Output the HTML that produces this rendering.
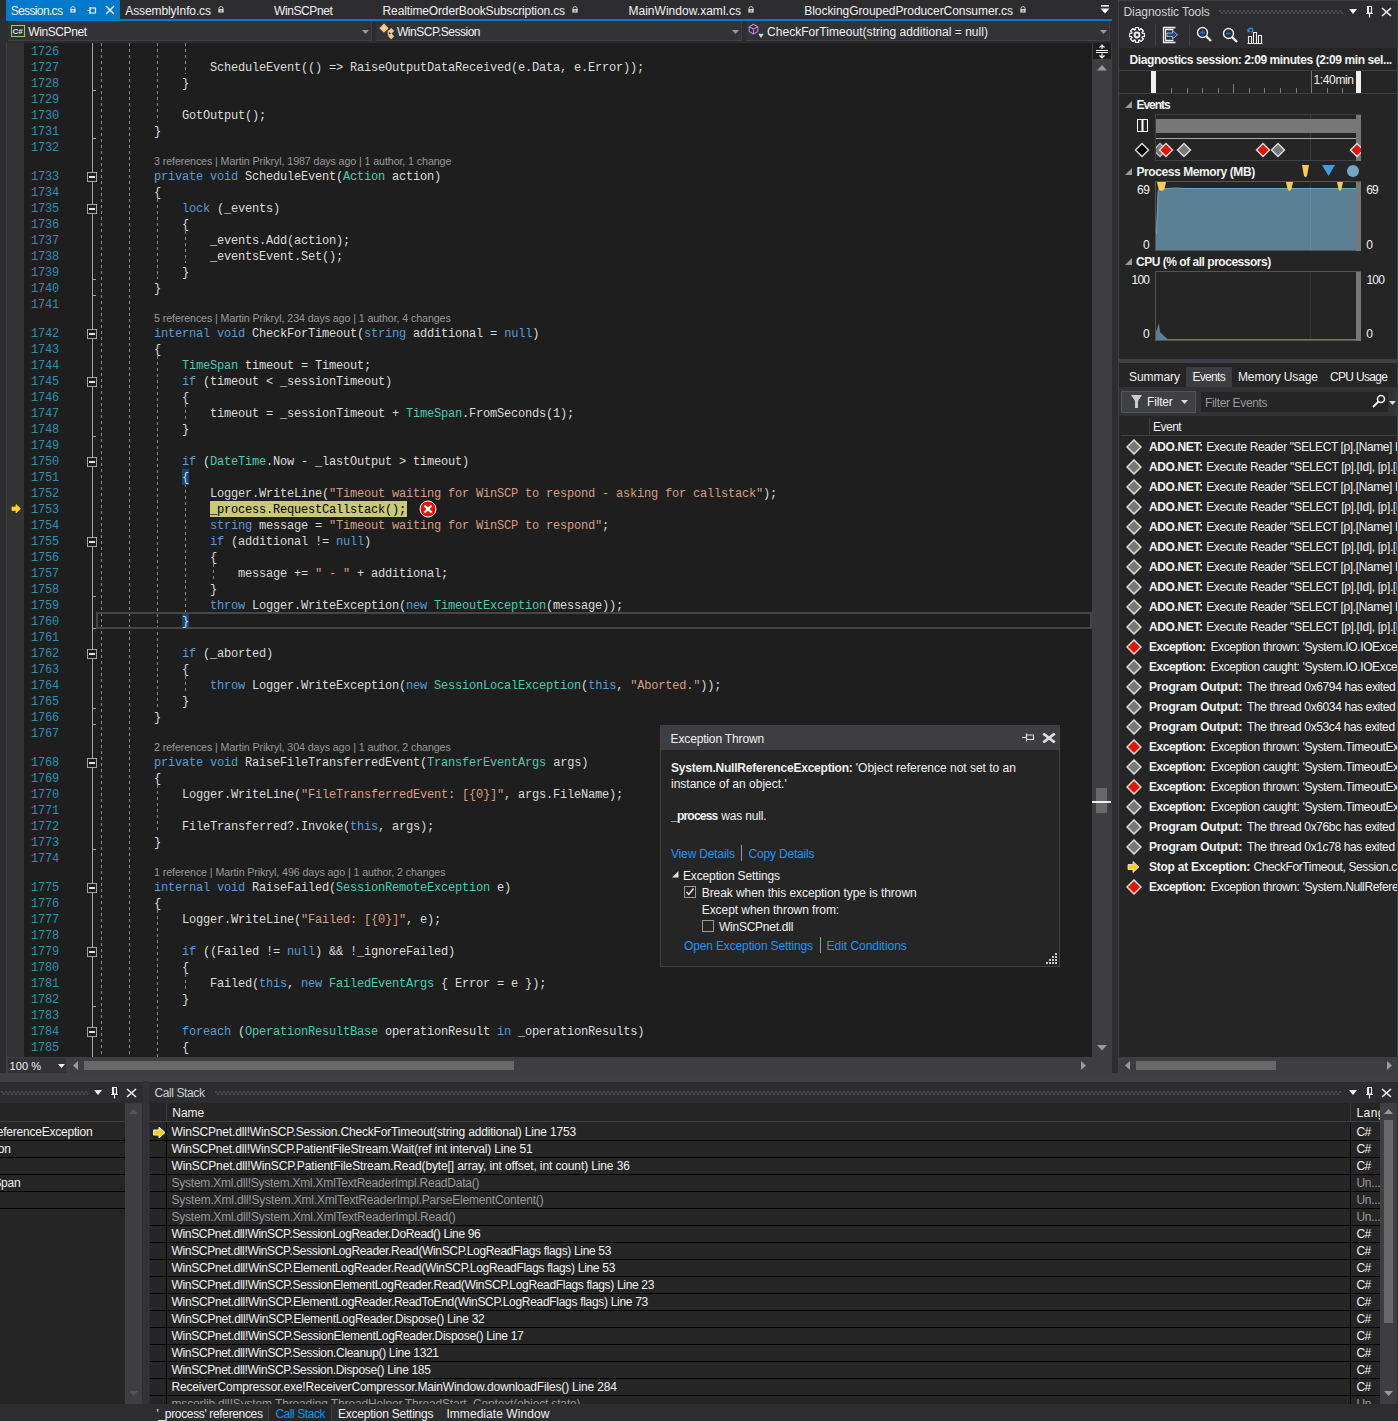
<!DOCTYPE html><html><head><meta charset="utf-8"><style>
*{margin:0;padding:0;box-sizing:border-box}
html,body{width:1398px;height:1421px;overflow:hidden;background:#2d2d30;font-family:"Liberation Sans",sans-serif;font-size:12px;color:#f1f1f1}
.a{position:absolute}
.t{position:absolute;white-space:pre;line-height:16px}
.code{z-index:2;font-family:"Liberation Mono",monospace;font-size:12px;letter-spacing:-0.2px;color:#dcdcdc}
.ln{font-family:"Liberation Mono",monospace;font-size:12px;letter-spacing:-0.2px;color:#2b91af;text-align:right;width:29px}
.k{color:#569cd6}.ty{color:#4ec9b0}.s{color:#d69d85}
.lens{font-size:10.7px;color:#999;letter-spacing:-0.1px}
</style></head><body>
<div class="a" style="left:6px;top:0;width:114px;height:19px;background:#007acc"></div>
<div class="a" style="left:6px;top:19px;width:1106px;height:2px;background:#007acc"></div>
<div class="t" style="left:10.70px;top:2.84px;letter-spacing:-0.637px;">Session.cs</div>
<div class="t" style="left:125.30px;top:2.84px;letter-spacing:-0.119px;">AssemblyInfo.cs</div>
<div class="t" style="left:274.00px;top:2.84px;letter-spacing:-0.403px;">WinSCPnet</div>
<div class="t" style="left:382.60px;top:2.84px;letter-spacing:-0.140px;">RealtimeOrderBookSubscription.cs</div>
<div class="t" style="left:628.40px;top:2.84px;letter-spacing:0.034px;">MainWindow.xaml.cs</div>
<div class="t" style="left:804.30px;top:2.84px;letter-spacing:-0.063px;">BlockingGroupedProducerConsumer.cs</div>
<svg class="a" style="left:70px;top:6px" width="6" height="7"><path d="M1 3 V2.2 Q1 0.6 3 0.6 Q5 0.6 5 2.2 V3" fill="none" stroke="#e8dcc8" stroke-width="0.9"/><rect x="0.3" y="3" width="5.4" height="3.6" fill="#e8dcc8"/><rect x="2.5" y="4" width="1" height="1.6" fill="#333"/></svg>
<svg class="a" style="left:218px;top:6px" width="6" height="7"><path d="M1 3 V2.2 Q1 0.6 3 0.6 Q5 0.6 5 2.2 V3" fill="none" stroke="#d0d0d0" stroke-width="0.9"/><rect x="0.3" y="3" width="5.4" height="3.6" fill="#d0d0d0"/><rect x="2.5" y="4" width="1" height="1.6" fill="#333"/></svg>
<svg class="a" style="left:572px;top:6px" width="6" height="7"><path d="M1 3 V2.2 Q1 0.6 3 0.6 Q5 0.6 5 2.2 V3" fill="none" stroke="#d0d0d0" stroke-width="0.9"/><rect x="0.3" y="3" width="5.4" height="3.6" fill="#d0d0d0"/><rect x="2.5" y="4" width="1" height="1.6" fill="#333"/></svg>
<svg class="a" style="left:748px;top:6px" width="6" height="7"><path d="M1 3 V2.2 Q1 0.6 3 0.6 Q5 0.6 5 2.2 V3" fill="none" stroke="#d0d0d0" stroke-width="0.9"/><rect x="0.3" y="3" width="5.4" height="3.6" fill="#d0d0d0"/><rect x="2.5" y="4" width="1" height="1.6" fill="#333"/></svg>
<svg class="a" style="left:1020px;top:6px" width="6" height="7"><path d="M1 3 V2.2 Q1 0.6 3 0.6 Q5 0.6 5 2.2 V3" fill="none" stroke="#d0d0d0" stroke-width="0.9"/><rect x="0.3" y="3" width="5.4" height="3.6" fill="#d0d0d0"/><rect x="2.5" y="4" width="1" height="1.6" fill="#333"/></svg>
<svg class="a" style="left:87px;top:6px" width="10" height="9"><path d="M0.5 4.5 H3 M3 1 V8 M3 2 H8.5 V7 H3" fill="none" stroke="#fff" stroke-width="1.2"/></svg>
<svg class="a" style="left:105px;top:5px" width="10" height="10"><path d="M1 1 L9 9 M9 1 L1 9" stroke="#fff" stroke-width="1.4"/></svg>
<svg class="a" style="left:1100px;top:5px" width="10" height="10"><rect x="1" y="0" width="8" height="1.6" fill="#fff"/><path d="M0.5 3.5 H9.5 L5 8.5 Z" fill="#fff"/></svg>
<div class="a" style="left:6px;top:21px;width:1106px;height:22px;background:#2d2d30"></div>
<div class="a" style="left:8px;top:21px;width:364px;height:20px;background:#333337;border-right:1px solid #3f3f46;border-bottom:1px solid #3f3f46"></div>
<svg class="a" style="left:362px;top:30px" width="7" height="4"><path d="M0 0 H7 L3.5 4Z" fill="#999"/></svg>
<div class="a" style="left:376px;top:21px;width:366px;height:20px;background:#333337;border-right:1px solid #3f3f46;border-bottom:1px solid #3f3f46"></div>
<svg class="a" style="left:732px;top:30px" width="7" height="4"><path d="M0 0 H7 L3.5 4Z" fill="#999"/></svg>
<div class="a" style="left:746px;top:21px;width:364px;height:20px;background:#333337;border-right:1px solid #3f3f46;border-bottom:1px solid #3f3f46"></div>
<svg class="a" style="left:1100px;top:30px" width="7" height="4"><path d="M0 0 H7 L3.5 4Z" fill="#999"/></svg>
<svg class="a" style="left:11px;top:25px" width="15" height="12"><rect x="0.5" y="0.5" width="13" height="11" fill="#333337" stroke="#8bd17c"/><text x="1.6" y="9" font-family="Liberation Sans" font-size="8" font-weight="bold" fill="#e0e0e0">C#</text></svg>
<div class="t" style="left:28.30px;top:23.84px;letter-spacing:-0.415px;">WinSCPnet</div>
<svg class="a" style="left:378px;top:22px" width="18" height="18"><path d="M6 1.6 L10.6 6.2 L6 10.8 L1.4 6.2 Z" fill="#f2c98e"/><path d="M13.2 6 L16.2 9 L13.2 12 L10.2 9 Z M13.2 11.2 L16.2 14.2 L13.2 17.2 L10.2 14.2 Z" fill="#f2c98e"/><path d="M10.3 8.5 V12.8 H13" fill="none" stroke="#f2c98e" stroke-width="1.2"/></svg>
<div class="t" style="left:397.00px;top:23.84px;letter-spacing:-0.486px;">WinSCP.Session</div>
<svg class="a" style="left:748px;top:23px" width="17" height="17"><path d="M5.5 1.3 L9.8 3.7 V8.5 L5.5 10.9 L1.2 8.5 V3.7 Z M1.2 3.7 L5.5 6.1 L9.8 3.7 M5.5 6.1 V10.9" fill="none" stroke="#b180d7" stroke-width="1.1" stroke-linejoin="round"/><path d="M10.5 11.2 Q12 9.8 13 11.2 Q14 9.8 15.5 11.2 L13 15 Z" fill="#d0d0d0"/></svg>
<div class="t" style="left:767.00px;top:23.84px;letter-spacing:0.042px;">CheckForTimeout(string additional = null)</div>
<div class="a" style="left:8px;top:43px;width:1084px;height:1014px;background:#1e1e1e"></div>
<div class="a" style="left:7px;top:43px;width:17px;height:1014px;background:#333333"></div>
<div class="a" style="left:6px;top:43px;width:1px;height:1030px;background:#3f3f46"></div>
<div class="t ln" style="left:30px;top:44px">1726</div>
<div class="t ln" style="left:30px;top:60px">1727</div>
<div class="t code" style="left:210px;top:60px">ScheduleEvent(() =&gt; RaiseOutputDataReceived(e.Data, e.Error));</div>
<div class="t ln" style="left:30px;top:76px">1728</div>
<div class="t code" style="left:182px;top:76px">}</div>
<div class="t ln" style="left:30px;top:92px">1729</div>
<div class="t ln" style="left:30px;top:108px">1730</div>
<div class="t code" style="left:182px;top:108px">GotOutput();</div>
<div class="t ln" style="left:30px;top:124px">1731</div>
<div class="t code" style="left:154px;top:124px">}</div>
<div class="t ln" style="left:30px;top:140px">1732</div>
<div class="t lens" style="left:154px;top:155px;line-height:13px">3 references | Martin Prikryl, 1987 days ago | 1 author, 1 change</div>
<div class="t ln" style="left:30px;top:169px">1733</div>
<div class="t code" style="left:154px;top:169px"><span class="k">private</span> <span class="k">void</span> ScheduleEvent(<span class="ty">Action</span> action)</div>
<div class="t ln" style="left:30px;top:185px">1734</div>
<div class="t code" style="left:154px;top:185px">{</div>
<div class="t ln" style="left:30px;top:201px">1735</div>
<div class="t code" style="left:182px;top:201px"><span class="k">lock</span> (_events)</div>
<div class="t ln" style="left:30px;top:217px">1736</div>
<div class="t code" style="left:182px;top:217px">{</div>
<div class="t ln" style="left:30px;top:233px">1737</div>
<div class="t code" style="left:210px;top:233px">_events.Add(action);</div>
<div class="t ln" style="left:30px;top:249px">1738</div>
<div class="t code" style="left:210px;top:249px">_eventsEvent.Set();</div>
<div class="t ln" style="left:30px;top:265px">1739</div>
<div class="t code" style="left:182px;top:265px">}</div>
<div class="t ln" style="left:30px;top:281px">1740</div>
<div class="t code" style="left:154px;top:281px">}</div>
<div class="t ln" style="left:30px;top:297px">1741</div>
<div class="t lens" style="left:154px;top:312px;line-height:13px">5 references | Martin Prikryl, 234 days ago | 1 author, 4 changes</div>
<div class="t ln" style="left:30px;top:326px">1742</div>
<div class="t code" style="left:154px;top:326px"><span class="k">internal</span> <span class="k">void</span> CheckForTimeout(<span class="k">string</span> additional = <span class="k">null</span>)</div>
<div class="t ln" style="left:30px;top:342px">1743</div>
<div class="t code" style="left:154px;top:342px">{</div>
<div class="t ln" style="left:30px;top:358px">1744</div>
<div class="t code" style="left:182px;top:358px"><span class="ty">TimeSpan</span> timeout = Timeout;</div>
<div class="t ln" style="left:30px;top:374px">1745</div>
<div class="t code" style="left:182px;top:374px"><span class="k">if</span> (timeout &lt; _sessionTimeout)</div>
<div class="t ln" style="left:30px;top:390px">1746</div>
<div class="t code" style="left:182px;top:390px">{</div>
<div class="t ln" style="left:30px;top:406px">1747</div>
<div class="t code" style="left:210px;top:406px">timeout = _sessionTimeout + <span class="ty">TimeSpan</span>.FromSeconds(1);</div>
<div class="t ln" style="left:30px;top:422px">1748</div>
<div class="t code" style="left:182px;top:422px">}</div>
<div class="t ln" style="left:30px;top:438px">1749</div>
<div class="t ln" style="left:30px;top:454px">1750</div>
<div class="t code" style="left:182px;top:454px"><span class="k">if</span> (<span class="ty">DateTime</span>.Now - _lastOutput &gt; timeout)</div>
<div class="t ln" style="left:30px;top:470px">1751</div>
<div class="t code" style="left:182px;top:470px">{</div>
<div class="t ln" style="left:30px;top:486px">1752</div>
<div class="t code" style="left:210px;top:486px">Logger.WriteLine(<span class="s">"Timeout waiting for WinSCP to respond - asking for callstack"</span>);</div>
<div class="t ln" style="left:30px;top:502px">1753</div>
<div class="t code" style="left:210px;top:502px"><span style="color:#000">_process.RequestCallstack();</span></div>
<div class="t ln" style="left:30px;top:518px">1754</div>
<div class="t code" style="left:210px;top:518px"><span class="k">string</span> message = <span class="s">"Timeout waiting for WinSCP to respond"</span>;</div>
<div class="t ln" style="left:30px;top:534px">1755</div>
<div class="t code" style="left:210px;top:534px"><span class="k">if</span> (additional != <span class="k">null</span>)</div>
<div class="t ln" style="left:30px;top:550px">1756</div>
<div class="t code" style="left:210px;top:550px">{</div>
<div class="t ln" style="left:30px;top:566px">1757</div>
<div class="t code" style="left:238px;top:566px">message += <span class="s">" - "</span> + additional;</div>
<div class="t ln" style="left:30px;top:582px">1758</div>
<div class="t code" style="left:210px;top:582px">}</div>
<div class="t ln" style="left:30px;top:598px">1759</div>
<div class="t code" style="left:210px;top:598px"><span class="k">throw</span> Logger.WriteException(<span class="k">new</span> <span class="ty">TimeoutException</span>(message));</div>
<div class="t ln" style="left:30px;top:614px">1760</div>
<div class="t code" style="left:182px;top:614px">}</div>
<div class="t ln" style="left:30px;top:630px">1761</div>
<div class="t ln" style="left:30px;top:646px">1762</div>
<div class="t code" style="left:182px;top:646px"><span class="k">if</span> (_aborted)</div>
<div class="t ln" style="left:30px;top:662px">1763</div>
<div class="t code" style="left:182px;top:662px">{</div>
<div class="t ln" style="left:30px;top:678px">1764</div>
<div class="t code" style="left:210px;top:678px"><span class="k">throw</span> Logger.WriteException(<span class="k">new</span> <span class="ty">SessionLocalException</span>(<span class="k">this</span>, <span class="s">"Aborted."</span>));</div>
<div class="t ln" style="left:30px;top:694px">1765</div>
<div class="t code" style="left:182px;top:694px">}</div>
<div class="t ln" style="left:30px;top:710px">1766</div>
<div class="t code" style="left:154px;top:710px">}</div>
<div class="t ln" style="left:30px;top:726px">1767</div>
<div class="t lens" style="left:154px;top:741px;line-height:13px">2 references | Martin Prikryl, 304 days ago | 1 author, 2 changes</div>
<div class="t ln" style="left:30px;top:755px">1768</div>
<div class="t code" style="left:154px;top:755px"><span class="k">private</span> <span class="k">void</span> RaiseFileTransferredEvent(<span class="ty">TransferEventArgs</span> args)</div>
<div class="t ln" style="left:30px;top:771px">1769</div>
<div class="t code" style="left:154px;top:771px">{</div>
<div class="t ln" style="left:30px;top:787px">1770</div>
<div class="t code" style="left:182px;top:787px">Logger.WriteLine(<span class="s">"FileTransferredEvent: [{0}]"</span>, args.FileName);</div>
<div class="t ln" style="left:30px;top:803px">1771</div>
<div class="t ln" style="left:30px;top:819px">1772</div>
<div class="t code" style="left:182px;top:819px">FileTransferred?.Invoke(<span class="k">this</span>, args);</div>
<div class="t ln" style="left:30px;top:835px">1773</div>
<div class="t code" style="left:154px;top:835px">}</div>
<div class="t ln" style="left:30px;top:851px">1774</div>
<div class="t lens" style="left:154px;top:866px;line-height:13px">1 reference | Martin Prikryl, 496 days ago | 1 author, 2 changes</div>
<div class="t ln" style="left:30px;top:880px">1775</div>
<div class="t code" style="left:154px;top:880px"><span class="k">internal</span> <span class="k">void</span> RaiseFailed(<span class="ty">SessionRemoteException</span> e)</div>
<div class="t ln" style="left:30px;top:896px">1776</div>
<div class="t code" style="left:154px;top:896px">{</div>
<div class="t ln" style="left:30px;top:912px">1777</div>
<div class="t code" style="left:182px;top:912px">Logger.WriteLine(<span class="s">"Failed: [{0}]"</span>, e);</div>
<div class="t ln" style="left:30px;top:928px">1778</div>
<div class="t ln" style="left:30px;top:944px">1779</div>
<div class="t code" style="left:182px;top:944px"><span class="k">if</span> ((Failed != <span class="k">null</span>) &amp;&amp; !_ignoreFailed)</div>
<div class="t ln" style="left:30px;top:960px">1780</div>
<div class="t code" style="left:182px;top:960px">{</div>
<div class="t ln" style="left:30px;top:976px">1781</div>
<div class="t code" style="left:210px;top:976px">Failed(<span class="k">this</span>, <span class="k">new</span> <span class="ty">FailedEventArgs</span> { Error = e });</div>
<div class="t ln" style="left:30px;top:992px">1782</div>
<div class="t code" style="left:182px;top:992px">}</div>
<div class="t ln" style="left:30px;top:1008px">1783</div>
<div class="t ln" style="left:30px;top:1024px">1784</div>
<div class="t code" style="left:182px;top:1024px"><span class="k">foreach</span> (<span class="ty">OperationResultBase</span> operationResult <span class="k">in</span> _operationResults)</div>
<div class="t ln" style="left:30px;top:1040px">1785</div>
<div class="t code" style="left:182px;top:1040px">{</div>
<div class="a" style="left:92px;top:43px;width:1px;height:1014px;background:#a5a5a5"></div>
<svg class="a" style="left:87px;top:172px" width="10" height="10"><rect x="0.5" y="0.5" width="9" height="9" fill="#1e1e1e" stroke="#a5a5a5"/><path d="M2 5 H8" stroke="#e0e0e0" stroke-width="2"/></svg>
<svg class="a" style="left:87px;top:204px" width="10" height="10"><rect x="0.5" y="0.5" width="9" height="9" fill="#1e1e1e" stroke="#a5a5a5"/><path d="M2 5 H8" stroke="#e0e0e0" stroke-width="2"/></svg>
<svg class="a" style="left:87px;top:329px" width="10" height="10"><rect x="0.5" y="0.5" width="9" height="9" fill="#1e1e1e" stroke="#a5a5a5"/><path d="M2 5 H8" stroke="#e0e0e0" stroke-width="2"/></svg>
<svg class="a" style="left:87px;top:377px" width="10" height="10"><rect x="0.5" y="0.5" width="9" height="9" fill="#1e1e1e" stroke="#a5a5a5"/><path d="M2 5 H8" stroke="#e0e0e0" stroke-width="2"/></svg>
<svg class="a" style="left:87px;top:457px" width="10" height="10"><rect x="0.5" y="0.5" width="9" height="9" fill="#1e1e1e" stroke="#a5a5a5"/><path d="M2 5 H8" stroke="#e0e0e0" stroke-width="2"/></svg>
<svg class="a" style="left:87px;top:537px" width="10" height="10"><rect x="0.5" y="0.5" width="9" height="9" fill="#1e1e1e" stroke="#a5a5a5"/><path d="M2 5 H8" stroke="#e0e0e0" stroke-width="2"/></svg>
<svg class="a" style="left:87px;top:649px" width="10" height="10"><rect x="0.5" y="0.5" width="9" height="9" fill="#1e1e1e" stroke="#a5a5a5"/><path d="M2 5 H8" stroke="#e0e0e0" stroke-width="2"/></svg>
<svg class="a" style="left:87px;top:758px" width="10" height="10"><rect x="0.5" y="0.5" width="9" height="9" fill="#1e1e1e" stroke="#a5a5a5"/><path d="M2 5 H8" stroke="#e0e0e0" stroke-width="2"/></svg>
<svg class="a" style="left:87px;top:883px" width="10" height="10"><rect x="0.5" y="0.5" width="9" height="9" fill="#1e1e1e" stroke="#a5a5a5"/><path d="M2 5 H8" stroke="#e0e0e0" stroke-width="2"/></svg>
<svg class="a" style="left:87px;top:947px" width="10" height="10"><rect x="0.5" y="0.5" width="9" height="9" fill="#1e1e1e" stroke="#a5a5a5"/><path d="M2 5 H8" stroke="#e0e0e0" stroke-width="2"/></svg>
<svg class="a" style="left:87px;top:1027px" width="10" height="10"><rect x="0.5" y="0.5" width="9" height="9" fill="#1e1e1e" stroke="#a5a5a5"/><path d="M2 5 H8" stroke="#e0e0e0" stroke-width="2"/></svg>
<div class="a" style="left:92px;top:90px;width:4px;height:1px;background:#a5a5a5"></div>
<div class="a" style="left:92px;top:138px;width:4px;height:1px;background:#a5a5a5"></div>
<div class="a" style="left:92px;top:279px;width:4px;height:1px;background:#a5a5a5"></div>
<div class="a" style="left:92px;top:295px;width:4px;height:1px;background:#a5a5a5"></div>
<div class="a" style="left:92px;top:436px;width:4px;height:1px;background:#a5a5a5"></div>
<div class="a" style="left:92px;top:596px;width:4px;height:1px;background:#a5a5a5"></div>
<div class="a" style="left:92px;top:628px;width:4px;height:1px;background:#a5a5a5"></div>
<div class="a" style="left:92px;top:708px;width:4px;height:1px;background:#a5a5a5"></div>
<div class="a" style="left:92px;top:724px;width:4px;height:1px;background:#a5a5a5"></div>
<div class="a" style="left:92px;top:849px;width:4px;height:1px;background:#a5a5a5"></div>
<div class="a" style="left:92px;top:1006px;width:4px;height:1px;background:#a5a5a5"></div>
<div class="a" style="left:101px;top:43px;width:1px;height:1014px;background:repeating-linear-gradient(to bottom,#8a8a8a 0,#8a8a8a 3px,transparent 3px,transparent 6px)"></div>
<div class="a" style="left:129px;top:43px;width:1px;height:1014px;background:repeating-linear-gradient(to bottom,#8a8a8a 0,#8a8a8a 3px,transparent 3px,transparent 6px)"></div>
<div class="a" style="left:157px;top:43px;width:1px;height:79px;background:repeating-linear-gradient(to bottom,#8a8a8a 0,#8a8a8a 3px,transparent 3px,transparent 6px)"></div>
<div class="a" style="left:157px;top:199px;width:1px;height:80px;background:repeating-linear-gradient(to bottom,#8a8a8a 0,#8a8a8a 3px,transparent 3px,transparent 6px)"></div>
<div class="a" style="left:157px;top:356px;width:1px;height:352px;background:repeating-linear-gradient(to bottom,#8a8a8a 0,#8a8a8a 3px,transparent 3px,transparent 6px)"></div>
<div class="a" style="left:157px;top:785px;width:1px;height:48px;background:repeating-linear-gradient(to bottom,#8a8a8a 0,#8a8a8a 3px,transparent 3px,transparent 6px)"></div>
<div class="a" style="left:157px;top:910px;width:1px;height:147px;background:repeating-linear-gradient(to bottom,#8a8a8a 0,#8a8a8a 3px,transparent 3px,transparent 6px)"></div>
<div class="a" style="left:185px;top:43px;width:1px;height:31px;background:repeating-linear-gradient(to bottom,#8a8a8a 0,#8a8a8a 3px,transparent 3px,transparent 6px)"></div>
<div class="a" style="left:185px;top:231px;width:1px;height:32px;background:repeating-linear-gradient(to bottom,#8a8a8a 0,#8a8a8a 3px,transparent 3px,transparent 6px)"></div>
<div class="a" style="left:185px;top:404px;width:1px;height:16px;background:repeating-linear-gradient(to bottom,#8a8a8a 0,#8a8a8a 3px,transparent 3px,transparent 6px)"></div>
<div class="a" style="left:185px;top:484px;width:1px;height:128px;background:repeating-linear-gradient(to bottom,#8a8a8a 0,#8a8a8a 3px,transparent 3px,transparent 6px)"></div>
<div class="a" style="left:185px;top:676px;width:1px;height:16px;background:repeating-linear-gradient(to bottom,#8a8a8a 0,#8a8a8a 3px,transparent 3px,transparent 6px)"></div>
<div class="a" style="left:185px;top:974px;width:1px;height:16px;background:repeating-linear-gradient(to bottom,#8a8a8a 0,#8a8a8a 3px,transparent 3px,transparent 6px)"></div>
<div class="a" style="left:213px;top:564px;width:1px;height:16px;background:repeating-linear-gradient(to bottom,#8a8a8a 0,#8a8a8a 3px,transparent 3px,transparent 6px)"></div>
<div class="a" style="left:182px;top:469px;width:7px;height:16px;background:#11497d"></div>
<div class="a" style="left:182px;top:613px;width:7px;height:16px;background:#11497d"></div>
<div class="a" style="left:96px;top:612px;width:996px;height:17px;border:2px solid #464646"></div>
<div class="a" style="left:210px;top:501px;width:197px;height:16px;background:#c9c977"></div>
<svg class="a" style="left:419px;top:500px" width="18" height="18"><circle cx="9" cy="9" r="8" fill="#e51400" stroke="#fff" stroke-width="1"/><path d="M5.5 5.5 L12.5 12.5 M12.5 5.5 L5.5 12.5" stroke="#fff" stroke-width="2.2"/></svg>
<svg class="a" style="left:11px;top:504px" width="11" height="10"><path d="M1 3 H5 V0.5 L9.5 4.75 L5 9 V6.5 H1 Z" fill="#fcd22a" stroke="#fcd22a" stroke-width="0.8" stroke-linejoin="round"/></svg>
<div style="position:absolute;left:0;top:0;z-index:5">
<div class="a" style="left:660px;top:725px;width:400px;height:242px;background:#252526;border:1px solid #434346"></div>
<div class="a" style="left:661px;top:726px;width:398px;height:24px;background:#3e3e42"></div>
<div class="t" style="left:670.60px;top:730.84px;letter-spacing:-0.155px;">Exception Thrown</div>
<svg class="a" style="left:1022px;top:733px" width="13" height="9"><path d="M0 4.5 H4.5 M4.5 0.5 V8.5 M4.5 2 H11.5 V6.5 H4.5" fill="none" stroke="#ddd" stroke-width="1.2"/></svg>
<svg class="a" style="left:1042px;top:733px" width="14" height="10"><path d="M1.2 0.5 L12.8 9.5 M12.8 0.5 L1.2 9.5" stroke="#ddd" stroke-width="2.8"/></svg>
<div class="t" style="left:671.00px;top:759.84px;font-weight:bold;letter-spacing:-0.216px;">System.NullReferenceException:</div>
<div class="t" style="left:855.80px;top:759.84px;letter-spacing:-0.009px;">'Object reference not set to an</div>
<div class="t" style="left:671.00px;top:775.84px;">instance of an object.'</div>
<div class="t" style="left:671.12px;top:807.84px;font-weight:bold;letter-spacing:-0.803px;">_process</div>
<div class="t" style="left:721.22px;top:807.84px;letter-spacing:-0.164px;">was null.</div>
<div class="t" style="left:671.00px;top:845.84px;letter-spacing:-0.165px;color:#1f95f5;">View Details</div>
<div class="a" style="left:741px;top:845px;width:1px;height:16px;background:#999"></div>
<div class="t" style="left:748.50px;top:845.84px;letter-spacing:-0.175px;color:#1f95f5;">Copy Details</div>
<svg class="a" style="left:672px;top:871px" width="7" height="7"><path d="M6.5 0 V6.5 H0 Z" fill="#ddd"/></svg>
<div class="t" style="left:683.00px;top:867.84px;letter-spacing:-0.141px;">Exception Settings</div>
<svg class="a" style="left:684px;top:886px" width="12" height="12"><rect x="0.5" y="0.5" width="11" height="11" fill="#252526" stroke="#999"/><path d="M2.5 6 L4.8 8.5 L9.5 2.5" fill="none" stroke="#f1f1f1" stroke-width="1.3"/></svg>
<div class="t" style="left:701.70px;top:884.84px;letter-spacing:-0.063px;">Break when this exception type is thrown</div>
<div class="t" style="left:701.70px;top:901.84px;letter-spacing:-0.053px;">Except when thrown from:</div>
<svg class="a" style="left:702px;top:920px" width="12" height="12"><rect x="0.5" y="0.5" width="11" height="11" fill="#252526" stroke="#999"/></svg>
<div class="t" style="left:719.00px;top:918.84px;letter-spacing:-0.255px;">WinSCPnet.dll</div>
<div class="t" style="left:684.00px;top:937.84px;letter-spacing:-0.140px;color:#1f95f5;">Open Exception Settings</div>
<div class="a" style="left:820px;top:937px;width:1px;height:16px;background:#999"></div>
<div class="t" style="left:826.60px;top:937.84px;letter-spacing:-0.036px;color:#1f95f5;">Edit Conditions</div>
<svg class="a" style="left:1046px;top:953px" width="12" height="12"><rect x="9" y="0" width="2" height="2" fill="#ccc"/><rect x="6" y="3" width="2" height="2" fill="#ccc"/><rect x="9" y="3" width="2" height="2" fill="#ccc"/><rect x="3" y="6" width="2" height="2" fill="#ccc"/><rect x="6" y="6" width="2" height="2" fill="#ccc"/><rect x="9" y="6" width="2" height="2" fill="#ccc"/><rect x="0" y="9" width="2" height="2" fill="#ccc"/><rect x="3" y="9" width="2" height="2" fill="#ccc"/><rect x="6" y="9" width="2" height="2" fill="#ccc"/><rect x="9" y="9" width="2" height="2" fill="#ccc"/></svg>
</div>
<div class="a" style="left:1092px;top:43px;width:20px;height:1014px;background:#3e3e42"></div>
<div class="a" style="left:1093px;top:43px;width:18px;height:16px;background:#1e1e1e"></div>
<div class="a" style="left:6px;top:1057px;width:1106px;height:16px;background:#3e3e42"></div>
<div class="a" style="left:8px;top:1058px;width:58px;height:15px;background:#333337"></div>
<div class="t" style="left:9.60px;top:1058.19px;font-size:11px;letter-spacing:0.051px;">100 %</div>
<svg class="a" style="left:58px;top:1064px" width="7" height="4"><path d="M0 0 H7 L3.5 4Z" fill="#f1f1f1"/></svg>
<svg class="a" style="left:73px;top:1061px" width="6" height="10"><path d="M5 0 V9 L0 4.5Z" fill="#999"/></svg>
<div class="a" style="left:84px;top:1061px;width:430px;height:9px;background:#686868"></div>
<svg class="a" style="left:1081px;top:1061px" width="6" height="10"><path d="M0 0 V9 L5 4.5Z" fill="#999"/></svg>
<svg class="a" style="left:1097px;top:65px" width="10" height="6"><path d="M0 5.5 L5 0 L10 5.5Z" fill="#999"/></svg>
<svg class="a" style="left:1097px;top:1045px" width="10" height="6"><path d="M0 0 L5 5.5 L10 0Z" fill="#999"/></svg>
<div class="a" style="left:1096px;top:788px;width:11px;height:25px;background:#686868"></div>
<div class="a" style="left:1092px;top:801px;width:19px;height:2px;background:#f1f1f1"></div>
<svg class="a" style="left:1093px;top:44px" width="18" height="15"><path d="M9 1 V5 M9 9.5 V14 M6.5 3.5 L9 1 L11.5 3.5 M6.5 11.5 L9 14 L11.5 11.5 M3 6.5 H15 M3 8.5 H15" fill="none" stroke="#f1f1f1" stroke-width="1.2"/></svg>
<div class="a" style="left:1118px;top:0;width:1px;height:1073px;background:#3f3f46"></div>
<div class="a" style="left:1119px;top:0;width:279px;height:1073px;background:#252526"></div>
<div class="a" style="left:1119px;top:0;width:279px;height:48px;background:#2d2d30"></div>
<div class="t" style="left:1123.50px;top:3.84px;letter-spacing:-0.057px;color:#d0d0d0;">Diagnostic Tools</div>
<div class="a" style="left:1218px;top:9px;width:125px;height:5px;background-image:radial-gradient(circle,#4a4a4e 0.7px,transparent 0.9px);background-size:4px 4px;background-position:0 0"></div>
<div class="a" style="left:1220px;top:11px;width:123px;height:3px;background-image:radial-gradient(circle,#4a4a4e 0.7px,transparent 0.9px);background-size:4px 4px"></div>
<svg class="a" style="left:1349px;top:9px" width="8" height="5"><path d="M0 0 H8 L4 5Z" fill="#f1f1f1"/></svg>
<svg class="a" style="left:1365px;top:6px" width="9" height="12"><path d="M2.5 0.5 H6.5 V7 H2.5 Z M3.5 1 V7 M1 7.5 H8 M4.5 7.5 V11.5" fill="none" stroke="#f1f1f1" stroke-width="1.1"/></svg>
<svg class="a" style="left:1381px;top:7px" width="11" height="10"><path d="M1 1 L10 9 M10 1 L1 9" stroke="#f1f1f1" stroke-width="1.6"/></svg>
<svg class="a" style="left:1128px;top:26px" width="18" height="18"><g transform="translate(9 9)"><path d="M5.35 -1.65 L7.42 -1.66 L7.42 1.66 L5.35 1.65 L4.95 2.61 L6.42 4.07 L4.07 6.42 L2.61 4.95 L1.65 5.35 L1.66 7.42 L-1.66 7.42 L-1.65 5.35 L-2.61 4.95 L-4.07 6.42 L-6.42 4.07 L-4.95 2.61 L-5.35 1.65 L-7.42 1.66 L-7.42 -1.66 L-5.35 -1.65 L-4.95 -2.61 L-6.42 -4.07 L-4.07 -6.42 L-2.61 -4.95 L-1.65 -5.35 L-1.66 -7.42 L1.66 -7.42 L1.65 -5.35 L2.61 -4.95 L4.07 -6.42 L6.42 -4.07 L4.95 -2.61 Z" fill="none" stroke="#f0f0f0" stroke-width="1.3" stroke-linejoin="round"/><circle r="2.4" fill="none" stroke="#f0f0f0" stroke-width="2"/></g></svg>
<div class="a" style="left:1155px;top:24px;width:1px;height:22px;background:#3f3f46"></div>
<div class="a" style="left:1189px;top:24px;width:1px;height:22px;background:#3f3f46"></div>
<svg class="a" style="left:1162px;top:26px" width="18" height="18"><path d="M13.5 1.5 H1.5 V16.5 H13.5 M11.5 3.5 H3.5 V14.5 H11.5" fill="none" stroke="#f0f0f0" stroke-width="1.3"/><path d="M5 7 H10.5 V4.5 L15.5 8.75 L10.5 13 V10.5 H5 Z" fill="#0e4fa0" stroke="#e0e0e0" stroke-width="0.7"/></svg>
<svg class="a" style="left:1196px;top:26px" width="18" height="18"><circle cx="6.5" cy="6.5" r="5" fill="none" stroke="#eee" stroke-width="1.4"/><path d="M10 10 L15 15" stroke="#eee" stroke-width="2.4"/><path d="M4 6.5 H9 M6.5 4 V9" stroke="#1e70c8" stroke-width="1.5"/></svg>
<svg class="a" style="left:1222px;top:27px" width="18" height="18"><circle cx="6.5" cy="6.5" r="5" fill="none" stroke="#eee" stroke-width="1.4"/><path d="M10 10 L15 15" stroke="#eee" stroke-width="2.4"/><path d="M4 6.5 H9" stroke="#1e70c8" stroke-width="1.5"/></svg>
<svg class="a" style="left:1246px;top:27px" width="18" height="18"><path d="M2.5 16.5 V9.5 H5.5 V16.5 M7.5 16.5 V5.5 H10.5 V16.5 M12.5 16.5 V8.5 H15.5 V16.5 M1.5 16.5 H16.5" fill="none" stroke="#eee" stroke-width="1.1"/><path d="M2 4 Q3 0.5 6 1.5 Q8 3 5.5 5.5 M2 2 L2 4.5 L4.5 4.5" fill="none" stroke="#1e90e8" stroke-width="1.4"/></svg>
<div class="t" style="left:1129.60px;top:51.84px;font-weight:bold;letter-spacing:-0.412px;">Diagnostics session: 2:09 minutes (2:09 min sel...</div>
<div class="a" style="left:1119px;top:70px;width:279px;height:1px;background:#3f3f46"></div>
<div class="a" style="left:1119px;top:93px;width:279px;height:1px;background:#3f3f46"></div>
<div class="a" style="left:1171px;top:88px;width:1px;height:5px;background:#777"></div>
<div class="a" style="left:1187px;top:88px;width:1px;height:5px;background:#777"></div>
<div class="a" style="left:1202px;top:88px;width:1px;height:5px;background:#777"></div>
<div class="a" style="left:1218px;top:88px;width:1px;height:5px;background:#777"></div>
<div class="a" style="left:1249px;top:88px;width:1px;height:5px;background:#777"></div>
<div class="a" style="left:1264px;top:88px;width:1px;height:5px;background:#777"></div>
<div class="a" style="left:1280px;top:88px;width:1px;height:5px;background:#777"></div>
<div class="a" style="left:1296px;top:88px;width:1px;height:5px;background:#777"></div>
<div class="a" style="left:1327px;top:88px;width:1px;height:5px;background:#777"></div>
<div class="a" style="left:1342px;top:88px;width:1px;height:5px;background:#777"></div>
<div class="a" style="left:1233px;top:84px;width:1px;height:9px;background:#777"></div>
<div class="a" style="left:1311px;top:71px;width:1px;height:22px;background:#777"></div>
<div class="t" style="left:1313.50px;top:71.84px;letter-spacing:-0.365px;">1:40min</div>
<div class="a" style="left:1151px;top:71px;width:5px;height:22px;background:#f1f1f1"></div>
<div class="a" style="left:1356px;top:71px;width:5px;height:22px;background:#f1f1f1"></div>
<svg class="a" style="left:1125px;top:101px" width="8" height="8"><path d="M7 0 L7 7 L0 7 Z" fill="#999"/></svg>
<div class="t" style="left:1136.40px;top:96.84px;font-weight:bold;letter-spacing:-0.990px;">Events</div>
<div class="a" style="left:1155px;top:114px;width:206px;height:47px;border:1px solid #3f3f46"></div>
<div class="a" style="left:1310px;top:115px;width:1px;height:45px;background:#3a3a3a"></div>
<div class="a" style="left:1156px;top:119px;width:200px;height:14px;background:#777"></div>
<div class="a" style="left:1156px;top:138px;width:205px;height:1px;background:#aaa"></div>
<div class="a" style="left:1356px;top:115px;width:5px;height:46px;background:#777"></div>
<svg class="a" style="left:1137px;top:119px" width="11" height="13"><rect x="0.5" y="0.5" width="10" height="12" fill="none" stroke="#fff"/><rect x="4.5" y="0.5" width="2" height="12" fill="#fff"/></svg>
<svg class="a" style="left:1134px;top:142px" width="16" height="16"><path d="M8 1.5 L14.5 8 L8 14.5 L1.5 8 Z" fill="#000" stroke="#ddd" stroke-width="1.4"/></svg>
<div class="a" style="left:1156px;top:140px;width:205px;height:20px;overflow:hidden">
<svg class="a" style="left:-4px;top:2px" width="16" height="16"><path d="M8 1.5 L14.5 8 L8 14.5 L1.5 8 Z" fill="#777" stroke="#bbb" stroke-width="1.4"/></svg>
<svg class="a" style="left:2px;top:2px" width="16" height="16"><path d="M8 1.5 L14.5 8 L8 14.5 L1.5 8 Z" fill="#e51400" stroke="#ddd" stroke-width="1.4"/></svg>
<svg class="a" style="left:20px;top:2px" width="16" height="16"><path d="M8 1.5 L14.5 8 L8 14.5 L1.5 8 Z" fill="#777" stroke="#ddd" stroke-width="1.4"/></svg>
<svg class="a" style="left:99px;top:2px" width="16" height="16"><path d="M8 1.5 L14.5 8 L8 14.5 L1.5 8 Z" fill="#e51400" stroke="#ddd" stroke-width="1.4"/></svg>
<svg class="a" style="left:114px;top:2px" width="16" height="16"><path d="M8 1.5 L14.5 8 L8 14.5 L1.5 8 Z" fill="#777" stroke="#ddd" stroke-width="1.4"/></svg>
<svg class="a" style="left:193px;top:2px" width="16" height="16"><path d="M8 1.5 L14.5 8 L8 14.5 L1.5 8 Z" fill="#e51400" stroke="#ddd" stroke-width="1.4"/></svg>
</div>
<svg class="a" style="left:1125px;top:168px" width="8" height="8"><path d="M7 0 L7 7 L0 7 Z" fill="#999"/></svg>
<div class="t" style="left:1136.40px;top:163.84px;font-weight:bold;letter-spacing:-0.402px;">Process Memory (MB)</div>
<svg class="a" style="left:1302px;top:165px" width="8" height="13"><path d="M0 0 H7 L5 11 Q3.5 13 2 11 Z" fill="#f7c95c"/></svg>
<svg class="a" style="left:1322px;top:165px" width="14" height="11"><path d="M0 0 H13 L6.5 11 Z" fill="#3c9ce6"/></svg>
<div class="a" style="left:1347px;top:165px;width:12px;height:12px;border-radius:6px;background:#72a7c4"></div>
<div class="a" style="left:1155px;top:181px;width:206px;height:70px;border:1px solid #555"></div>
<svg class="a" style="left:1156px;top:182px" width="204" height="68"><path d="M0 68 L0 52 L2 10 L3 7 L10 6.5 L20 6 L30 6.5 L200 6.5 L200 68 Z" fill="#5b7f93"/><path d="M0.5 52 L2 10 L3 7 L10 6.5 L20 6 L30 6.5 L200 6.5" fill="none" stroke="#6aa5c6" stroke-width="1"/></svg>
<div class="a" style="left:1310px;top:182px;width:1px;height:69px;background:rgba(255,255,255,0.08)"></div>
<div class="a" style="left:1356px;top:182px;width:5px;height:69px;background:#777"></div>
<svg class="a" style="left:1157px;top:182px" width="9" height="10"><path d="M0 0 H9 L7.5 7 Q4.5 11 1.5 7 Z" fill="#f7c95c"/></svg>
<svg class="a" style="left:1286px;top:182px" width="7" height="10"><path d="M0 0 H7 L5.5 7 Q3.5 11 1.5 7 Z" fill="#f7c95c"/></svg>
<svg class="a" style="left:1337px;top:182px" width="6" height="10"><path d="M0 0 H6 L4.5 7 Q3.0 11 1.5 7 Z" fill="#f7c95c"/></svg>
<div class="t" style="left:1137.00px;top:181.84px;letter-spacing:-0.350px;">69</div>
<div class="t" style="left:1143.00px;top:236.84px;">0</div>
<div class="t" style="left:1366.30px;top:181.84px;letter-spacing:-0.850px;">69</div>
<div class="t" style="left:1366.30px;top:236.84px;">0</div>
<svg class="a" style="left:1125px;top:258px" width="8" height="8"><path d="M7 0 L7 7 L0 7 Z" fill="#999"/></svg>
<div class="t" style="left:1136.00px;top:253.84px;font-weight:bold;letter-spacing:-0.479px;">CPU (% of all processors)</div>
<div class="a" style="left:1155px;top:271px;width:206px;height:70px;border:1px solid #555"></div>
<div class="a" style="left:1310px;top:272px;width:1px;height:68px;background:rgba(255,255,255,0.08)"></div>
<div class="a" style="left:1356px;top:272px;width:5px;height:69px;background:#777"></div>
<svg class="a" style="left:1156px;top:272px" width="200" height="68"><path d="M0 68 L0 60 L3 51 L4 60 L8 64 L13 68 Z" fill="#5b7f93"/><path d="M0 67.5 H200" stroke="#5b7f93"/></svg>
<div class="t" style="left:1131.60px;top:271.84px;letter-spacing:-0.810px;">100</div>
<div class="t" style="left:1143.00px;top:325.84px;">0</div>
<div class="t" style="left:1366.50px;top:271.84px;letter-spacing:-0.810px;">100</div>
<div class="t" style="left:1366.30px;top:325.84px;">0</div>
<div class="a" style="left:1119px;top:359px;width:279px;height:4px;background:#3f3f46"></div>
<div class="a" style="left:1119px;top:363px;width:279px;height:24px;background:#252526"></div>
<div class="a" style="left:1186px;top:367px;width:46px;height:20px;background:#3e3e42"></div>
<div class="t" style="left:1129.00px;top:368.84px;letter-spacing:-0.057px;">Summary</div>
<div class="t" style="left:1192.40px;top:368.84px;letter-spacing:-0.658px;">Events</div>
<div class="t" style="left:1238.00px;top:368.84px;letter-spacing:-0.124px;">Memory Usage</div>
<div class="t" style="left:1330.00px;top:368.84px;letter-spacing:-0.670px;">CPU Usage</div>
<div class="a" style="left:1119px;top:387px;width:279px;height:29px;background:#333337"></div>
<div class="a" style="left:1121px;top:391px;width:75px;height:22px;background:#3f3f46;border:1px solid #555"></div>
<svg class="a" style="left:1131px;top:395px" width="11" height="13"><path d="M0 0 H11 L7 6 V13 H4 V6 Z" fill="#ccc"/></svg>
<div class="t" style="left:1147.00px;top:393.84px;letter-spacing:-0.174px;">Filter</div>
<svg class="a" style="left:1181px;top:400px" width="7" height="4"><path d="M0 0 H7 L3.5 4Z" fill="#ddd"/></svg>
<div class="a" style="left:1201px;top:392px;width:187px;height:20px;background:#252526"></div>
<div class="t" style="left:1205.00px;top:394.84px;letter-spacing:-0.341px;color:#999;">Filter Events</div>
<svg class="a" style="left:1372px;top:394px" width="14" height="14"><circle cx="9" cy="5" r="3.5" fill="none" stroke="#eee" stroke-width="1.6"/><path d="M6.5 7.5 L1 13" stroke="#eee" stroke-width="2"/></svg>
<svg class="a" style="left:1389px;top:401px" width="7" height="4"><path d="M0 0 H7 L3.5 4Z" fill="#ddd"/></svg>
<div class="a" style="left:1149px;top:418px;width:1px;height:17px;background:#3f3f46"></div>
<div class="a" style="left:1121px;top:435px;width:277px;height:1px;background:#3f3f46"></div>
<div class="t" style="left:1153.00px;top:418.84px;letter-spacing:-0.498px;">Event</div>
<div class="a" style="left:1119px;top:437px;width:278px;height:470px;overflow:hidden">
<svg class="a" style="left:7px;top:2px" width="16" height="16"><path d="M8 1 L15 8 L8 15 L1 8 Z" fill="#777" stroke="#ddd" stroke-width="1.5"/></svg>
<div class="t" style="left:30.00px;top:1.84px;font-weight:bold;letter-spacing:-0.381px;">ADO.NET:</div>
<div class="t" style="left:87.20px;top:1.84px;letter-spacing:-0.393px;">Execute Reader "SELECT [p].[Name] FROM [Products]</div>
<svg class="a" style="left:7px;top:22px" width="16" height="16"><path d="M8 1 L15 8 L8 15 L1 8 Z" fill="#777" stroke="#ddd" stroke-width="1.5"/></svg>
<div class="t" style="left:30.00px;top:21.84px;font-weight:bold;letter-spacing:-0.381px;">ADO.NET:</div>
<div class="t" style="left:87.20px;top:21.84px;letter-spacing:-0.364px;">Execute Reader "SELECT [p].[Id], [p].[Name]</div>
<svg class="a" style="left:7px;top:42px" width="16" height="16"><path d="M8 1 L15 8 L8 15 L1 8 Z" fill="#777" stroke="#ddd" stroke-width="1.5"/></svg>
<div class="t" style="left:30.00px;top:41.84px;font-weight:bold;letter-spacing:-0.381px;">ADO.NET:</div>
<div class="t" style="left:87.20px;top:41.84px;letter-spacing:-0.393px;">Execute Reader "SELECT [p].[Name] FROM [Products]</div>
<svg class="a" style="left:7px;top:62px" width="16" height="16"><path d="M8 1 L15 8 L8 15 L1 8 Z" fill="#777" stroke="#ddd" stroke-width="1.5"/></svg>
<div class="t" style="left:30.00px;top:61.84px;font-weight:bold;letter-spacing:-0.381px;">ADO.NET:</div>
<div class="t" style="left:87.20px;top:61.84px;letter-spacing:-0.364px;">Execute Reader "SELECT [p].[Id], [p].[Name]</div>
<svg class="a" style="left:7px;top:82px" width="16" height="16"><path d="M8 1 L15 8 L8 15 L1 8 Z" fill="#777" stroke="#ddd" stroke-width="1.5"/></svg>
<div class="t" style="left:30.00px;top:81.84px;font-weight:bold;letter-spacing:-0.381px;">ADO.NET:</div>
<div class="t" style="left:87.20px;top:81.84px;letter-spacing:-0.393px;">Execute Reader "SELECT [p].[Name] FROM [Products]</div>
<svg class="a" style="left:7px;top:102px" width="16" height="16"><path d="M8 1 L15 8 L8 15 L1 8 Z" fill="#777" stroke="#ddd" stroke-width="1.5"/></svg>
<div class="t" style="left:30.00px;top:101.84px;font-weight:bold;letter-spacing:-0.381px;">ADO.NET:</div>
<div class="t" style="left:87.20px;top:101.84px;letter-spacing:-0.364px;">Execute Reader "SELECT [p].[Id], [p].[Name]</div>
<svg class="a" style="left:7px;top:122px" width="16" height="16"><path d="M8 1 L15 8 L8 15 L1 8 Z" fill="#777" stroke="#ddd" stroke-width="1.5"/></svg>
<div class="t" style="left:30.00px;top:121.84px;font-weight:bold;letter-spacing:-0.381px;">ADO.NET:</div>
<div class="t" style="left:87.20px;top:121.84px;letter-spacing:-0.393px;">Execute Reader "SELECT [p].[Name] FROM [Products]</div>
<svg class="a" style="left:7px;top:142px" width="16" height="16"><path d="M8 1 L15 8 L8 15 L1 8 Z" fill="#777" stroke="#ddd" stroke-width="1.5"/></svg>
<div class="t" style="left:30.00px;top:141.84px;font-weight:bold;letter-spacing:-0.381px;">ADO.NET:</div>
<div class="t" style="left:87.20px;top:141.84px;letter-spacing:-0.364px;">Execute Reader "SELECT [p].[Id], [p].[Name]</div>
<svg class="a" style="left:7px;top:162px" width="16" height="16"><path d="M8 1 L15 8 L8 15 L1 8 Z" fill="#777" stroke="#ddd" stroke-width="1.5"/></svg>
<div class="t" style="left:30.00px;top:161.84px;font-weight:bold;letter-spacing:-0.381px;">ADO.NET:</div>
<div class="t" style="left:87.20px;top:161.84px;letter-spacing:-0.393px;">Execute Reader "SELECT [p].[Name] FROM [Products]</div>
<svg class="a" style="left:7px;top:182px" width="16" height="16"><path d="M8 1 L15 8 L8 15 L1 8 Z" fill="#777" stroke="#ddd" stroke-width="1.5"/></svg>
<div class="t" style="left:30.00px;top:181.84px;font-weight:bold;letter-spacing:-0.381px;">ADO.NET:</div>
<div class="t" style="left:87.20px;top:181.84px;letter-spacing:-0.364px;">Execute Reader "SELECT [p].[Id], [p].[Name]</div>
<svg class="a" style="left:7px;top:202px" width="16" height="16"><path d="M8 1 L15 8 L8 15 L1 8 Z" fill="#e51400" stroke="#ddd" stroke-width="1.5"/></svg>
<div class="t" style="left:30.00px;top:201.84px;font-weight:bold;letter-spacing:-0.482px;">Exception:</div>
<div class="t" style="left:91.40px;top:201.84px;letter-spacing:-0.365px;">Exception thrown: 'System.IO.IOException'</div>
<svg class="a" style="left:7px;top:222px" width="16" height="16"><path d="M8 1 L15 8 L8 15 L1 8 Z" fill="#777" stroke="#ddd" stroke-width="1.5"/></svg>
<div class="t" style="left:30.00px;top:221.84px;font-weight:bold;letter-spacing:-0.482px;">Exception:</div>
<div class="t" style="left:91.40px;top:221.84px;letter-spacing:-0.365px;">Exception caught: 'System.IO.IOException'</div>
<svg class="a" style="left:7px;top:242px" width="16" height="16"><path d="M8 1 L15 8 L8 15 L1 8 Z" fill="#777" stroke="#ddd" stroke-width="1.5"/></svg>
<div class="t" style="left:30.00px;top:241.84px;font-weight:bold;letter-spacing:-0.186px;">Program Output:</div>
<div class="t" style="left:128.10px;top:241.84px;letter-spacing:-0.376px;">The thread 0x6794 has exited</div>
<svg class="a" style="left:7px;top:262px" width="16" height="16"><path d="M8 1 L15 8 L8 15 L1 8 Z" fill="#777" stroke="#ddd" stroke-width="1.5"/></svg>
<div class="t" style="left:30.00px;top:261.84px;font-weight:bold;letter-spacing:-0.186px;">Program Output:</div>
<div class="t" style="left:128.10px;top:261.84px;letter-spacing:-0.376px;">The thread 0x6034 has exited</div>
<svg class="a" style="left:7px;top:282px" width="16" height="16"><path d="M8 1 L15 8 L8 15 L1 8 Z" fill="#777" stroke="#ddd" stroke-width="1.5"/></svg>
<div class="t" style="left:30.00px;top:281.84px;font-weight:bold;letter-spacing:-0.186px;">Program Output:</div>
<div class="t" style="left:128.10px;top:281.84px;letter-spacing:-0.375px;">The thread 0x53c4 has exited</div>
<svg class="a" style="left:7px;top:302px" width="16" height="16"><path d="M8 1 L15 8 L8 15 L1 8 Z" fill="#e51400" stroke="#ddd" stroke-width="1.5"/></svg>
<div class="t" style="left:30.00px;top:301.84px;font-weight:bold;letter-spacing:-0.482px;">Exception:</div>
<div class="t" style="left:91.40px;top:301.84px;letter-spacing:-0.369px;">Exception thrown: 'System.TimeoutException'</div>
<svg class="a" style="left:7px;top:322px" width="16" height="16"><path d="M8 1 L15 8 L8 15 L1 8 Z" fill="#777" stroke="#ddd" stroke-width="1.5"/></svg>
<div class="t" style="left:30.00px;top:321.84px;font-weight:bold;letter-spacing:-0.482px;">Exception:</div>
<div class="t" style="left:91.40px;top:321.84px;letter-spacing:-0.369px;">Exception caught: 'System.TimeoutException'</div>
<svg class="a" style="left:7px;top:342px" width="16" height="16"><path d="M8 1 L15 8 L8 15 L1 8 Z" fill="#e51400" stroke="#ddd" stroke-width="1.5"/></svg>
<div class="t" style="left:30.00px;top:341.84px;font-weight:bold;letter-spacing:-0.482px;">Exception:</div>
<div class="t" style="left:91.40px;top:341.84px;letter-spacing:-0.369px;">Exception thrown: 'System.TimeoutException'</div>
<svg class="a" style="left:7px;top:362px" width="16" height="16"><path d="M8 1 L15 8 L8 15 L1 8 Z" fill="#777" stroke="#ddd" stroke-width="1.5"/></svg>
<div class="t" style="left:30.00px;top:361.84px;font-weight:bold;letter-spacing:-0.482px;">Exception:</div>
<div class="t" style="left:91.40px;top:361.84px;letter-spacing:-0.369px;">Exception caught: 'System.TimeoutException'</div>
<svg class="a" style="left:7px;top:382px" width="16" height="16"><path d="M8 1 L15 8 L8 15 L1 8 Z" fill="#777" stroke="#ddd" stroke-width="1.5"/></svg>
<div class="t" style="left:30.00px;top:381.84px;font-weight:bold;letter-spacing:-0.186px;">Program Output:</div>
<div class="t" style="left:128.10px;top:381.84px;letter-spacing:-0.375px;">The thread 0x76bc has exited</div>
<svg class="a" style="left:7px;top:402px" width="16" height="16"><path d="M8 1 L15 8 L8 15 L1 8 Z" fill="#777" stroke="#ddd" stroke-width="1.5"/></svg>
<div class="t" style="left:30.00px;top:401.84px;font-weight:bold;letter-spacing:-0.186px;">Program Output:</div>
<div class="t" style="left:128.10px;top:401.84px;letter-spacing:-0.375px;">The thread 0x1c78 has exited</div>
<svg class="a" style="left:8px;top:424px" width="13" height="12"><path d="M1 3.5 H6 V0.5 L12 6 L6 11.5 V8.5 H1 Z" fill="#f9d01a" stroke="#eee" stroke-width="0.8"/></svg>
<div class="t" style="left:30.00px;top:421.84px;font-weight:bold;letter-spacing:-0.238px;">Stop at Exception:</div>
<div class="t" style="left:134.50px;top:421.84px;letter-spacing:-0.393px;">CheckForTimeout, Session.cs</div>
<svg class="a" style="left:7px;top:442px" width="16" height="16"><path d="M8 1 L15 8 L8 15 L1 8 Z" fill="#e51400" stroke="#ddd" stroke-width="1.5"/></svg>
<div class="t" style="left:30.00px;top:441.84px;font-weight:bold;letter-spacing:-0.482px;">Exception:</div>
<div class="t" style="left:91.40px;top:441.84px;letter-spacing:-0.367px;">Exception thrown: 'System.NullReferenceException'</div>
</div>
<div class="a" style="left:1119px;top:1057px;width:279px;height:16px;background:#3e3e42"></div>
<svg class="a" style="left:1125px;top:1061px" width="6" height="10"><path d="M5 0 V9 L0 4.5Z" fill="#999"/></svg>
<div class="a" style="left:1136px;top:1061px;width:140px;height:9px;background:#686868"></div>
<svg class="a" style="left:1387px;top:1061px" width="6" height="10"><path d="M0 0 V9 L5 4.5Z" fill="#999"/></svg>
<div class="a" style="left:1397px;top:0;width:1px;height:1073px;background:#3f3f46"></div>
<div class="a" style="left:1118px;top:0;width:280px;height:1px;background:#3f3f46"></div>
<div class="a" style="left:0;top:1073px;width:1398px;height:9px;background:#3f3f46"></div>
<div class="a" style="left:0;top:1082px;width:142px;height:21px;background:#2d2d30"></div>
<div class="a" style="left:0px;top:1090px;width:88px;height:5px;background-image:radial-gradient(circle,#4a4a4e 0.7px,transparent 0.9px);background-size:4px 4px;background-position:0 0"></div>
<div class="a" style="left:2px;top:1092px;width:86px;height:3px;background-image:radial-gradient(circle,#4a4a4e 0.7px,transparent 0.9px);background-size:4px 4px"></div>
<svg class="a" style="left:94px;top:1090px" width="8" height="5"><path d="M0 0 H8 L4 5Z" fill="#f1f1f1"/></svg>
<svg class="a" style="left:110px;top:1087px" width="9" height="12"><path d="M2.5 0.5 H6.5 V7 H2.5 Z M3.5 1 V7 M1 7.5 H8 M4.5 7.5 V11.5" fill="none" stroke="#f1f1f1" stroke-width="1.1"/></svg>
<svg class="a" style="left:126px;top:1088px" width="11" height="10"><path d="M1 1 L10 9 M10 1 L1 9" stroke="#f1f1f1" stroke-width="1.6"/></svg>
<div class="a" style="left:0;top:1103px;width:142px;height:301px;background:#252526"></div>
<div class="a" style="left:125px;top:1103px;width:17px;height:301px;background:#3e3e42"></div>
<svg class="a" style="left:129px;top:1109px" width="9" height="5"><path d="M0 5 L4.5 0 L9 5Z" fill="#555"/></svg>
<svg class="a" style="left:129px;top:1391px" width="9" height="5"><path d="M0 0 L4.5 5 L9 0Z" fill="#555"/></svg>
<div class="a" style="left:0;top:1121px;width:125px;height:1px;background:#3f3f46"></div>
<div class="a" style="left:0;top:1140px;width:125px;height:1px;background:#000"></div>
<div class="a" style="left:0;top:1157px;width:125px;height:1px;background:#000"></div>
<div class="a" style="left:0;top:1174px;width:125px;height:1px;background:#000"></div>
<div class="a" style="left:0;top:1191px;width:125px;height:1px;background:#000"></div>
<div class="a" style="left:0;top:1208px;width:125px;height:1px;background:#000"></div>
<div class="t" style="left:-73.36px;top:1123.84px;letter-spacing:-0.215px;">System.NullReferenceException</div>
<div class="t" style="left:-39.96px;top:1140.84px;letter-spacing:-0.231px;">Exception</div>
<div class="t" style="left:-31.75px;top:1174.84px;letter-spacing:-0.271px;">TimeSpan</div>
<div class="a" style="left:142px;top:1082px;width:8px;height:322px;background:#2d2d30"></div>
<div class="a" style="left:143px;top:1081px;width:6px;height:323px;background:#333337"></div>
<div class="a" style="left:150px;top:1082px;width:1248px;height:21px;background:#2d2d30"></div>
<div class="t" style="left:154.40px;top:1084.84px;letter-spacing:-0.382px;color:#d0d0d0;">Call Stack</div>
<div class="a" style="left:214px;top:1090px;width:1127px;height:5px;background-image:radial-gradient(circle,#4a4a4e 0.7px,transparent 0.9px);background-size:4px 4px;background-position:0 0"></div>
<div class="a" style="left:216px;top:1092px;width:1125px;height:3px;background-image:radial-gradient(circle,#4a4a4e 0.7px,transparent 0.9px);background-size:4px 4px"></div>
<svg class="a" style="left:1349px;top:1090px" width="8" height="5"><path d="M0 0 H8 L4 5Z" fill="#f1f1f1"/></svg>
<svg class="a" style="left:1365px;top:1087px" width="9" height="12"><path d="M2.5 0.5 H6.5 V7 H2.5 Z M3.5 1 V7 M1 7.5 H8 M4.5 7.5 V11.5" fill="none" stroke="#f1f1f1" stroke-width="1.1"/></svg>
<svg class="a" style="left:1381px;top:1088px" width="11" height="10"><path d="M1 1 L10 9 M10 1 L1 9" stroke="#f1f1f1" stroke-width="1.6"/></svg>
<div class="a" style="left:150px;top:1103px;width:1230px;height:301px;background:#252526"></div>
<div class="a" style="left:1380px;top:1103px;width:17px;height:301px;background:#3e3e42"></div>
<svg class="a" style="left:1384px;top:1109px" width="9" height="5"><path d="M0 5 L4.5 0 L9 5Z" fill="#999"/></svg>
<svg class="a" style="left:1384px;top:1391px" width="9" height="5"><path d="M0 0 L4.5 5 L9 0Z" fill="#999"/></svg>
<div class="a" style="left:1384px;top:1120px;width:9px;height:203px;background:#686868"></div>
<div class="a" style="left:166px;top:1103px;width:1px;height:19px;background:#3f3f46"></div>
<div class="a" style="left:1350px;top:1103px;width:1px;height:19px;background:#3f3f46"></div>
<div class="a" style="left:150px;top:1121px;width:1230px;height:1px;background:#3f3f46"></div>
<div class="t" style="left:172.30px;top:1104.84px;letter-spacing:-0.037px;">Name</div>
<div class="a" style="left:1350px;top:1103px;width:30px;height:19px;overflow:hidden">
<div class="t" style="left:6.50px;top:1.84px;letter-spacing:0.433px;">Lang</div>
</div>
<div class="a" style="left:166px;top:1122px;width:1px;height:282px;background:#000"></div>
<div class="a" style="left:1350px;top:1122px;width:1px;height:282px;background:#000"></div>
<div class="a" style="left:150px;top:1122px;width:1230px;height:282px;overflow:hidden">
<div class="a" style="left:0;top:18px;width:1230px;height:1px;background:#000"></div>
<div class="t" style="left:21.50px;top:1.84px;letter-spacing:-0.169px;color:#f1f1f1;">WinSCPnet.dll!WinSCP.Session.CheckForTimeout(string additional) Line 1753</div>
<div class="t" style="left:1206.50px;top:1.84px;letter-spacing:-0.767px;color:#f1f1f1;">C#</div>
<div class="a" style="left:0;top:35px;width:1230px;height:1px;background:#000"></div>
<div class="t" style="left:21.50px;top:18.84px;letter-spacing:-0.172px;color:#f1f1f1;">WinSCPnet.dll!WinSCP.PatientFileStream.Wait(ref int interval) Line 51</div>
<div class="t" style="left:1206.50px;top:18.84px;letter-spacing:-0.767px;color:#f1f1f1;">C#</div>
<div class="a" style="left:0;top:52px;width:1230px;height:1px;background:#000"></div>
<div class="t" style="left:21.50px;top:35.84px;letter-spacing:-0.121px;color:#f1f1f1;">WinSCPnet.dll!WinSCP.PatientFileStream.Read(byte[] array, int offset, int count) Line 36</div>
<div class="t" style="left:1206.50px;top:35.84px;letter-spacing:-0.767px;color:#f1f1f1;">C#</div>
<div class="a" style="left:0;top:69px;width:1230px;height:1px;background:#000"></div>
<div class="t" style="left:21.50px;top:52.84px;letter-spacing:-0.228px;color:#999;">System.Xml.dll!System.Xml.XmlTextReaderImpl.ReadData()</div>
<div class="t" style="left:1206.50px;top:52.84px;letter-spacing:-0.317px;color:#999;">Un...</div>
<div class="a" style="left:0;top:86px;width:1230px;height:1px;background:#000"></div>
<div class="t" style="left:21.50px;top:69.84px;letter-spacing:-0.177px;color:#999;">System.Xml.dll!System.Xml.XmlTextReaderImpl.ParseElementContent()</div>
<div class="t" style="left:1206.50px;top:69.84px;letter-spacing:-0.317px;color:#999;">Un...</div>
<div class="a" style="left:0;top:103px;width:1230px;height:1px;background:#000"></div>
<div class="t" style="left:21.50px;top:86.84px;letter-spacing:-0.215px;color:#999;">System.Xml.dll!System.Xml.XmlTextReaderImpl.Read()</div>
<div class="t" style="left:1206.50px;top:86.84px;letter-spacing:-0.317px;color:#999;">Un...</div>
<div class="a" style="left:0;top:120px;width:1230px;height:1px;background:#000"></div>
<div class="t" style="left:21.50px;top:103.84px;letter-spacing:-0.341px;color:#f1f1f1;">WinSCPnet.dll!WinSCP.SessionLogReader.DoRead() Line 96</div>
<div class="t" style="left:1206.50px;top:103.84px;letter-spacing:-0.767px;color:#f1f1f1;">C#</div>
<div class="a" style="left:0;top:137px;width:1230px;height:1px;background:#000"></div>
<div class="t" style="left:21.50px;top:120.84px;letter-spacing:-0.342px;color:#f1f1f1;">WinSCPnet.dll!WinSCP.SessionLogReader.Read(WinSCP.LogReadFlags flags) Line 53</div>
<div class="t" style="left:1206.50px;top:120.84px;letter-spacing:-0.767px;color:#f1f1f1;">C#</div>
<div class="a" style="left:0;top:154px;width:1230px;height:1px;background:#000"></div>
<div class="t" style="left:21.50px;top:137.84px;letter-spacing:-0.307px;color:#f1f1f1;">WinSCPnet.dll!WinSCP.ElementLogReader.Read(WinSCP.LogReadFlags flags) Line 53</div>
<div class="t" style="left:1206.50px;top:137.84px;letter-spacing:-0.767px;color:#f1f1f1;">C#</div>
<div class="a" style="left:0;top:171px;width:1230px;height:1px;background:#000"></div>
<div class="t" style="left:21.50px;top:154.84px;letter-spacing:-0.325px;color:#f1f1f1;">WinSCPnet.dll!WinSCP.SessionElementLogReader.Read(WinSCP.LogReadFlags flags) Line 23</div>
<div class="t" style="left:1206.50px;top:154.84px;letter-spacing:-0.767px;color:#f1f1f1;">C#</div>
<div class="a" style="left:0;top:188px;width:1230px;height:1px;background:#000"></div>
<div class="t" style="left:21.50px;top:171.84px;letter-spacing:-0.301px;color:#f1f1f1;">WinSCPnet.dll!WinSCP.ElementLogReader.ReadToEnd(WinSCP.LogReadFlags flags) Line 73</div>
<div class="t" style="left:1206.50px;top:171.84px;letter-spacing:-0.767px;color:#f1f1f1;">C#</div>
<div class="a" style="left:0;top:205px;width:1230px;height:1px;background:#000"></div>
<div class="t" style="left:21.50px;top:188.84px;letter-spacing:-0.273px;color:#f1f1f1;">WinSCPnet.dll!WinSCP.ElementLogReader.Dispose() Line 32</div>
<div class="t" style="left:1206.50px;top:188.84px;letter-spacing:-0.767px;color:#f1f1f1;">C#</div>
<div class="a" style="left:0;top:222px;width:1230px;height:1px;background:#000"></div>
<div class="t" style="left:21.50px;top:205.84px;letter-spacing:-0.301px;color:#f1f1f1;">WinSCPnet.dll!WinSCP.SessionElementLogReader.Dispose() Line 17</div>
<div class="t" style="left:1206.50px;top:205.84px;letter-spacing:-0.767px;color:#f1f1f1;">C#</div>
<div class="a" style="left:0;top:239px;width:1230px;height:1px;background:#000"></div>
<div class="t" style="left:21.50px;top:222.84px;letter-spacing:-0.321px;color:#f1f1f1;">WinSCPnet.dll!WinSCP.Session.Cleanup() Line 1321</div>
<div class="t" style="left:1206.50px;top:222.84px;letter-spacing:-0.767px;color:#f1f1f1;">C#</div>
<div class="a" style="left:0;top:256px;width:1230px;height:1px;background:#000"></div>
<div class="t" style="left:21.50px;top:239.84px;letter-spacing:-0.330px;color:#f1f1f1;">WinSCPnet.dll!WinSCP.Session.Dispose() Line 185</div>
<div class="t" style="left:1206.50px;top:239.84px;letter-spacing:-0.767px;color:#f1f1f1;">C#</div>
<div class="a" style="left:0;top:273px;width:1230px;height:1px;background:#000"></div>
<div class="t" style="left:21.50px;top:256.84px;letter-spacing:-0.177px;color:#f1f1f1;">ReceiverCompressor.exe!ReceiverCompressor.MainWindow.downloadFiles() Line 284</div>
<div class="t" style="left:1206.50px;top:256.84px;letter-spacing:-0.767px;color:#f1f1f1;">C#</div>
<div class="a" style="left:0;top:290px;width:1230px;height:1px;background:#000"></div>
<div class="t" style="left:21.50px;top:273.84px;letter-spacing:-0.157px;color:#999;">mscorlib.dll!System.Threading.ThreadHelper.ThreadStart_Context(object state)</div>
<div class="t" style="left:1206.50px;top:273.84px;letter-spacing:-0.317px;color:#999;">Un...</div>
<svg class="a" style="left:3px;top:5px" width="13" height="11"><path d="M0.5 3 H6 V0 L12 5.5 L6 11 V8 H0.5 Z" fill="#f9d01a" stroke="#f5f5f5" stroke-width="1"/></svg>
</div>
<div class="a" style="left:0;top:1404px;width:1398px;height:17px;background:#2d2d30"></div>
<div class="a" style="left:269px;top:1404px;width:62px;height:17px;background:#252526"></div>
<div class="a" style="left:331px;top:1404px;width:1px;height:17px;background:#3f3f46"></div>
<div class="a" style="left:268px;top:1404px;width:1px;height:17px;background:#3f3f46"></div>
<div class="t" style="left:156.60px;top:1405.84px;letter-spacing:-0.350px;">'_process' references</div>
<div class="t" style="left:275.40px;top:1405.84px;letter-spacing:-0.438px;color:#0097fb;">Call Stack</div>
<div class="t" style="left:338.00px;top:1405.84px;letter-spacing:-0.229px;">Exception Settings</div>
<div class="t" style="left:446.40px;top:1405.84px;letter-spacing:0.062px;">Immediate Window</div>
</body></html>
